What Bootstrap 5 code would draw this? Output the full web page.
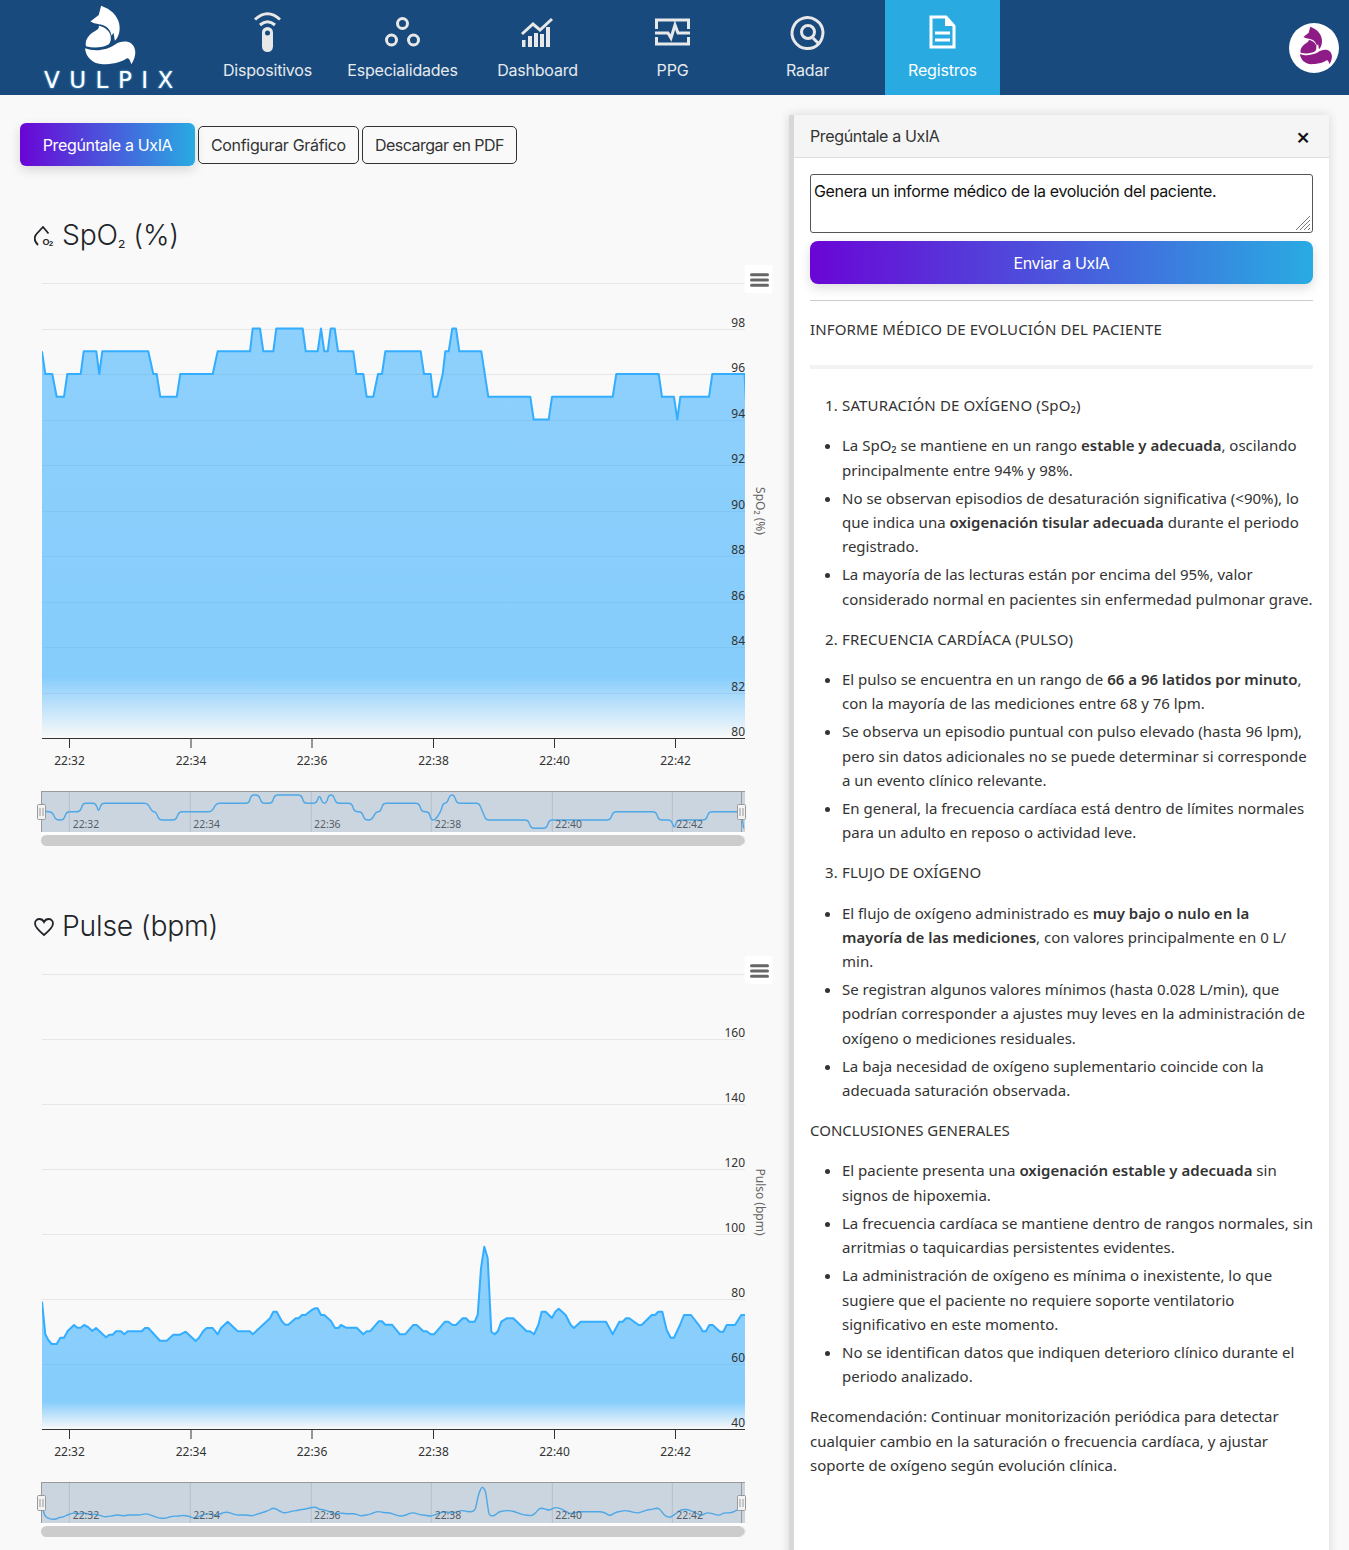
<!DOCTYPE html>
<html lang="es">
<head>
    <meta charset="UTF-8">
    <meta name="viewport" content="width=device-width, initial-scale=1.0">
    <title>Registros - Vulpix</title>
    <link href="https://cdn.jsdelivr.net/npm/bootstrap@5.3.2/dist/css/bootstrap.min.css" rel="stylesheet">
    <style>
        body {
            background-color: #f9f9f9;
            font-family: Inter, "Noto Sans", sans-serif;
            color: #212529;
            overflow: hidden;
            height: 1550px;
        }
        .topbar {
            background-color: #194a7d;
            height: 95px;
            align-items: stretch;
            flex-wrap: nowrap;
        }
        .brand-box {
            width: 210px;
            height: 95px;
            padding: 5px 0 0 44px;
        }
        .brand-fox { display: block; width: 52px; height: 60px; margin-left: 41px; fill: #fff; }
        .brand-name {
            display: block;
            margin-top: 4px;
            color: #fff;
            font-family: "DejaVu Sans", sans-serif;
            font-size: 23px;
            line-height: 23px;
            letter-spacing: 9.5px;
            white-space: nowrap;
            text-shadow: 0 0 2px #7fd0f0;
        }
        .topbar .navbar-nav { gap: 20px; }
        .topbar .nav-link {
            width: 115px;
            height: 95px;
            padding: 0;
            color: #e6eaee;
            font-size: 16px;
            letter-spacing: -.2px;
            text-align: center;
            white-space: nowrap;
        }
        .topbar .nav-link.active { background-color: #29abe2; color: #fff; }
        .topbar .nav-link svg { display: block; width: 115px; height: 60px; margin-bottom: -2px; }
        .menu-ico { fill: none; stroke: #e8e8e8; stroke-width: 3; }
        .active .menu-ico { stroke: #fff; }
        .avatar-round {
            width: 50px;
            height: 50px;
            margin: 23px 10px 0 0;
            border-radius: 50%;
            background-color: #fff;
        }
        .avatar-round svg { display: block; width: 33px; height: 41px; margin: 2px 0 0 11px; fill: #8e1b86; }

        .charts-col { width: 789px; flex: none; padding: 28px 0 0 20px; }
        .tool-row { gap: 3px; }
        .btn-uxia {
            background: linear-gradient(90deg, #6a05d6, #29abe2);
            color: #fff;
            border: 0;
            border-radius: 6px;
            box-shadow: 0 4px 12px rgba(0, 0, 0, .14);
            letter-spacing: -.35px;
        }
        .btn-uxia:hover { color: #fff; }
        .tool-btn {
            height: 38px;
            padding: 0 12px;
            border: 1px solid #333;
            border-radius: 5px;
            color: #333;
            letter-spacing: -.33px;
        }
        .pdf-btn { letter-spacing: -.5px; }
        .ask-btn { width: 175px; height: 43px; padding: 0; }
        .chart-title {
            display: flex;
            align-items: center;
            gap: 8px;
            height: 40px;
            margin: 50px 0 6px 14px;
            font-size: 28.3px;
            font-weight: 300;
            letter-spacing: -.2px;
        }
        .chart-title svg { flex: none; width: 20px; height: 20px; }
        .sub-two { font-size: 18px; }
        .chart-box { display: block; width: 760px; height: 592px; margin-bottom: 53px; font-family: "Noto Sans", sans-serif; }

        .ia-panel {
            width: 540px;
            height: 1500px;
            margin-top: 20px;
            border: 0;
            border-left: 5px solid #d8d8d8;
            border-radius: 0;
            background-color: #fff;
            box-shadow: 0 0 10px rgba(0, 0, 0, .14);
        }
        .ia-panel .card-header {
            display: flex;
            justify-content: space-between;
            align-items: center;
            height: 43px;
            padding: 0 16px;
            border-radius: 0;
            background-color: #f5f5f5;
            border-bottom: 1px solid #ddd;
            font-size: 16px;
            letter-spacing: -.35px;
            color: #333;
        }
        .close-x { border: 0; background: none; padding: 0; width: 20px; font-size: 22px; line-height: 22px; font-weight: 500; color: #111; }
        .ia-panel .card-body { padding: 16px; }
        .ask-input {
            display: block;
            width: 100%;
            height: 59px;
            padding: 3px 3px;
            border: 1px solid #555;
            border-radius: 3px;
            font-size: 16px;
            line-height: 26px;
            letter-spacing: -.35px;
            color: #111;
            background-color: #fff;
            resize: none;
        }
        .ask-grip { right: 2px; bottom: 2px; width: 16px; height: 16px; }
        .send-btn { display: block; width: 100%; height: 43px; margin-top: 8px; padding: 0; border-radius: 8px; }
        .thin-rule { margin: 16px 0 16px; border: 0; border-top: 1px solid #ccc; opacity: 1; }
        .report-text {
            font-family: "Noto Sans", sans-serif;
            font-size: 15px;
            line-height: 24.2px;
            color: #333;
        }
        .report-text p { margin-bottom: 16px; }
        .report-text ol, .report-text ul { margin-bottom: 16px; padding-left: 32px; }
        .report-text ul li { margin-bottom: 4px; }
        .report-text ul li:last-child { margin-bottom: 0; }
        .report-text b { font-weight: 600; }
        .report-text .caps-line { letter-spacing: .15px; }
        .thick-rule { height: 4px; margin: 24px 0; border: 0; background-color: #f3f3f3; opacity: 1; }
    </style>
</head>
<body>
    <svg width="0" height="0" class="position-absolute">
        <symbol id="fox" viewBox="137 15 155 175">
            <path d="M185 15 L205 24 C228 38 243 62 240 88 C239 100 234 112 226 120 L222 96 L216 105 C214 90 205 80 195 75 C180 68 165 70 153 62 L178 43 Z"/>
            <path d="M178 75 C192 78 206 86 212 100 C216 112 214 122 208 130 C190 140 165 143 140 136 C136 120 146 105 160 95 C172 87 180 85 178 75 Z"/>
            <path d="M137 142 C165 153 205 148 228 130 C240 122 262 118 275 128 C290 140 292 165 275 190 C272 178 268 170 262 172 C245 185 215 190 190 190 C160 188 140 170 137 142 Z"/>
        </symbol>
    </svg>

    <nav class="navbar topbar p-0 justify-content-start">
        <div class="brand-box">
            <svg class="brand-fox"><use href="#fox"/></svg>
            <span class="brand-name">VULPIX</span>
        </div>
        <ul class="navbar-nav flex-row">
            <li class="nav-item">
                <a class="nav-link" href="#">
                    <svg viewBox="0 0 115 60">
                        <path class="menu-ico" d="M45 19.5 Q57.5 8 70 19.5 M50 25 Q57.5 18.5 65 25"/>
                        <rect x="52" y="27" width="11" height="25" rx="5.5" fill="#e8e8e8"/>
                        <circle cx="57.5" cy="33" r="2.5" fill="#194a7d"/>
                    </svg>
                    Dispositivos
                </a>
            </li>
            <li class="nav-item">
                <a class="nav-link" href="#">
                    <svg viewBox="0 0 115 60">
                        <g class="menu-ico"><circle cx="57.5" cy="23.5" r="5"/><circle cx="46.5" cy="40" r="5"/><circle cx="68.5" cy="40" r="5"/></g>
                    </svg>
                    Especialidades
                </a>
            </li>
            <li class="nav-item">
                <a class="nav-link" href="#">
                    <svg viewBox="0 0 115 60">
                        <path fill="#e8e8e8" d="M42 40h3.500v7h-3.500zM48 36h4v11h-4zM54 33h4v14h-4zM60 34h4v13h-4zM66 27h4v20h-4z"/>
                        <path class="menu-ico" stroke-width="2.600" d="M42 34 L53 24 L60 30 L72 19"/>
                    </svg>
                    Dashboard
                </a>
            </li>
            <li class="nav-item">
                <a class="nav-link" href="#">
                    <svg viewBox="0 0 115 60">
                        <path class="menu-ico" d="M41.500 29 V20 H73.500 V29 M41.500 37 V44 H73.500 V37 M40 33 H53 L56 38 L60 25 L63 33 H75"/>
                    </svg>
                    PPG
                </a>
            </li>
            <li class="nav-item">
                <a class="nav-link" href="#">
                    <svg viewBox="0 0 115 60">
                        <path class="menu-ico" stroke-width="3.400" d="M69 43.500 A15.500 15.500 0 1 1 73 32 C73 37 71 41 69 43.500 M63 38 L69 44"/>
                        <circle class="menu-ico" stroke-width="3.400" cx="58" cy="32" r="6.500"/>
                    </svg>
                    Radar
                </a>
            </li>
            <li class="nav-item">
                <a class="nav-link active" href="#">
                    <svg viewBox="0 0 115 60">
                        <path class="menu-ico" stroke-width="3.500" d="M46 17 H61 L69 26 V47 H46 Z"/>
                        <path fill="#fff" d="M60 16 L70 26 H60 Z"/>
                        <path fill="#fff" d="M50 31.500h15v3H50zM50 38.500h15v3H50z"/>
                    </svg>
                    Registros
                </a>
            </li>
        </ul>
        <div class="avatar-round ms-auto">
            <svg><use href="#fox"/></svg>
        </div>
    </nav>

    <main class="d-flex">
        <section class="charts-col">
            <div class="d-flex align-items-center tool-row">
                <button class="btn btn-uxia ask-btn" type="button">Pregúntale a UxIA</button>
                <button class="btn tool-btn" type="button">Configurar Gráfico</button>
                <button class="btn tool-btn pdf-btn" type="button">Descargar en PDF</button>
            </div>

            <h2 class="chart-title">
                <svg viewBox="0 0 20 20">
                    <path d="M4 19 C0 15 0 11 2.500 8 L9 1 L14.500 7.500" fill="none" stroke="#212529" stroke-width="1.800"/>
                    <text x="8.500" y="19" font-size="9" font-weight="700" fill="#212529" font-family="Liberation Sans, sans-serif">O</text>
                    <text x="15" y="19.500" font-size="7.500" font-weight="700" fill="#212529" font-family="Liberation Sans, sans-serif">2</text>
                </svg>
                <span>SpO<span class="sub-two">₂</span> (%)</span>
            </h2>
            <svg class="chart-box" id="chartSpo2" viewBox="20 262 760 592"></svg>

            <h2 class="chart-title">
                <svg viewBox="0 0 20 20">
                    <path d="M10 18 C4 13 1 10 1 6.500 C1 3.500 3.200 2 5.500 2 C7.500 2 9 3 10 5 C11 3 12.500 2 14.500 2 C16.800 2 19 3.500 19 6.500 C19 10 16 13 10 18 Z" fill="none" stroke="#212529" stroke-width="1.800"/>
                </svg>
                <span>Pulse (bpm)</span>
            </h2>
            <svg class="chart-box" id="chartPulse" viewBox="20 262 760 592"></svg>
        </section>

        <aside class="card ia-panel">
            <div class="card-header">
                <span>Pregúntale a UxIA</span>
                <button class="close-x" type="button">×</button>
            </div>
            <div class="card-body">
                <div class="position-relative">
                    <textarea class="ask-input">Genera un informe médico de la evolución del paciente.</textarea>
                    <svg class="ask-grip position-absolute" viewBox="0 0 16 16"><path d="M15 1 L1 15 M15 5 L5 15 M15 9 L9 15 M15 13 L13 15" stroke="#777" fill="none"/></svg>
                </div>
                <button class="btn btn-uxia send-btn" type="button">Enviar a UxIA</button>
                <hr class="thin-rule">
                <div class="report-text">
                    <p class="caps-line">INFORME MÉDICO DE EVOLUCIÓN DEL PACIENTE</p>
                    <hr class="thick-rule">
                    <ol class="caps-line"><li>SATURACIÓN DE OXÍGENO (SpO₂)</li></ol>
                    <ul>
                        <li>La SpO₂ se mantiene en un rango <b>estable y adecuada</b>, oscilando principalmente entre 94% y 98%.</li>
                        <li>No se observan episodios de desaturación significativa (&lt;90%), lo que indica una <b>oxigenación tisular adecuada</b> durante el periodo registrado.</li>
                        <li>La mayoría de las lecturas están por encima del 95%, valor considerado normal en pacientes sin enfermedad pulmonar grave.</li>
                    </ul>
                    <ol class="caps-line" start="2"><li>FRECUENCIA CARDÍACA (PULSO)</li></ol>
                    <ul>
                        <li>El pulso se encuentra en un rango de <b>66 a 96 latidos por minuto</b>, con la mayoría de las mediciones entre 68 y 76 lpm.</li>
                        <li>Se observa un episodio puntual con pulso elevado (hasta 96 lpm), pero sin datos adicionales no se puede determinar si corresponde a un evento clínico relevante.</li>
                        <li>En general, la frecuencia cardíaca está dentro de límites normales para un adulto en reposo o actividad leve.</li>
                    </ul>
                    <ol class="caps-line" start="3"><li>FLUJO DE OXÍGENO</li></ol>
                    <ul>
                        <li>El flujo de oxígeno administrado es <b>muy bajo o nulo en la mayoría de las mediciones</b>, con valores principalmente en 0&nbsp;L/<wbr>min.</li>
                        <li>Se registran algunos valores mínimos (hasta 0.028 L/min), que podrían corresponder a ajustes muy leves en la administración de oxígeno o mediciones residuales.</li>
                        <li>La baja necesidad de oxígeno suplementario coincide con la adecuada saturación observada.</li>
                    </ul>
                    <p>CONCLUSIONES GENERALES</p>
                    <ul>
                        <li>El paciente presenta una <b>oxigenación estable y adecuada</b> sin signos de hipoxemia.</li>
                        <li>La frecuencia cardíaca se mantiene dentro de rangos normales, sin arritmias o taquicardias persistentes evidentes.</li>
                        <li>La administración de oxígeno es mínima o inexistente, lo que sugiere que el paciente no requiere soporte ventilatorio significativo en este momento.</li>
                        <li>No se identifican datos que indiquen deterioro clínico durante el periodo analizado.</li>
                    </ul>
                    <p>Recomendación: Continuar monitorización periódica para detectar cualquier cambio en la saturación o frecuencia cardíaca, y ajustar soporte de oxígeno según evolución clínica.</p>
                </div>
            </div>
        </aside>
    </main>

    <script src="https://cdn.jsdelivr.net/npm/bootstrap@5.3.2/dist/js/bootstrap.bundle.min.js"></script>
    <script>
        // [x, valor] de cada serie, x en pixeles del grafico
        const spo2 = [[42,97],[45.3,96],[52.3,96],[56.7,95],[64,95],[67.3,96],[80.7,96],[83.7,97],[96.3,97],[99.3,96],[102.3,97],
            [148.3,97],[153.3,96],[156.7,96],[160.3,95],[176.7,95],[180.3,96],[212.7,96],[217.7,97],[250,97],[252.7,98],[260,98],
            [263.3,97],[273.3,97],[276.3,98],[302.7,98],[305.7,97],[317.7,97],[321,98],[324.3,97],[327.7,97],[330.7,98],[334.7,98],
            [338,97],[353.3,97],[356.3,96],[363.3,96],[366.7,95],[373.3,95],[378,96],[382,96],[385.3,97],[420.7,97],[424,96],
            [430.7,96],[433.3,95],[437.3,95],[442.7,96],[445.3,97],[448.7,97],[452.3,98],[456,98],[459.3,97],[481.3,97],[488.3,95],
            [530.3,95],[533.7,94],[548.7,94],[552,95],[612.7,95],[616.3,96],[658.7,96],[662,95],[674,95],[677.3,94],[680.3,95],
            [709,95],[712.3,96],[744.5,96],[747,94]];

        const pulseA = [[66,245],[76,343],[85,360],[95,372],[110,372],[121,353],[132,353],[143,333],[162,315],[172,323],[182,323],
            [192,315],[204,321],[217,333],[228,324],[258,352],[268,344],[278,344],[288,334],[303,334],[313,343],[323,334],[365,334],
            [375,324],[385,324],[420,362],[440,362],[460,344],[480,344],[497,335],[527,363],[537,353],[550,333],[560,324],[578,324],
            [593,343],[603,324],[623,305],[653,334],[690,334],[698,343],[750,295],[760,275],[770,275],[785,303],[795,314],[805,314],
            [827,295],[836,295],[846,285],[856,285],[875,270],[885,265],[893,265],[903,285],[913,285],[933,303],[945,324],[955,324],
            [963,315],[978,323],[1010,323],[1030,343],[1040,334],[1050,334],[1076,304],[1086,304],[1096,314],[1116,314],[1140,343]];
        const pulseB = [[15,343],[40,315],[50,315],[70,334],[80,334],[92,343],[102,343],[135,305],[145,305],[158,315],[168,315],
            [188,295],[198,295],[208,305],[224,305],[233,285],[243,145],[253,80],[263,115],[274,335],[284,343],[294,333],[304,305],
            [320,295],[340,295],[380,334],[390,334],[402,343],[415,315],[425,275],[437,275],[456,294],[466,275],[476,266],[497,285],
            [512,315],[522,324],[542,305],[618,305],[638,343],[658,305],[668,305],[678,295],[688,295],[716,315],[725,315],[755,285],
            [765,285],[775,275],[787,275],[800,330],[812,353],[822,353],[840,315],[852,285],[873,285],[900,320],[908,334],[918,334],
            [928,315],[938,315],[960,335],[970,335],[980,315],[1005,315],[1024,285],[1035,285]];

        const ticks = [[69.5, 72.7, '22:32'], [191, 193.3, '22:34'], [312, 314, '22:36'], [433.5, 434.7, '22:38'], [554.5, 555.3, '22:40'], [675.5, 676.3, '22:42']];
        const navLines = [69.3, 190.3, 311.3, 431.3, 552.3, 672.3];

        function linePath(pts) {
            return pts.map((p, i) => (i ? 'L' : 'M') + p[0].toFixed(1) + ' ' + p[1].toFixed(1)).join(' ');
        }

        // linea del navegador con las esquinas suavizadas
        function smoothPath(pts, r) {
            let d = 'M' + pts[0][0] + ' ' + pts[0][1];
            for (let i = 1; i < pts.length - 1; i++) {
                const [x, y] = pts[i], [px, py] = pts[i - 1], [nx, ny] = pts[i + 1];
                const l1 = Math.hypot(x - px, y - py), l2 = Math.hypot(nx - x, ny - y);
                const a = Math.min(r, l1 / 2) / l1, b = Math.min(r, l2 / 2) / l2;
                d += ` L${(x + (px - x) * a).toFixed(1)} ${(y + (py - y) * a).toFixed(1)} Q${x} ${y} ${(x + (nx - x) * b).toFixed(1)} ${(y + (ny - y) * b).toFixed(1)}`;
            }
            const last = pts[pts.length - 1];
            return d + ' L' + last[0] + ' ' + last[1];
        }

        function drawChart(svg, cfg) {
            const id = svg.id;
            let html = `<defs>
                <clipPath id="${id}Clip"><rect x="42" y="262" width="703" height="592"/></clipPath>
                <linearGradient id="${id}Fill" x1="0" y1="0" x2="0" y2="1">
                    <stop offset="0" stop-color="#33adff" stop-opacity=".54"/>
                    <stop offset=".85" stop-color="#33adff" stop-opacity=".58"/>
                    <stop offset="1" stop-color="#33adff" stop-opacity="0"/>
                </linearGradient></defs>`;

            cfg.grid.forEach(y => { html += `<path d="M42 ${y}H745" stroke="#e6e6e6"/>`; });

            const area = linePath(cfg.points) + ' L747 738 L42 738 Z';
            html += `<g clip-path="url(#${id}Clip)">
                <path d="${area}" fill="url(#${id}Fill)"/>
                <path d="${linePath(cfg.points)}" fill="none" stroke="#33adff" stroke-width="2" stroke-linejoin="round"/></g>`;

            cfg.labels.forEach(([y, txt]) => {
                html += `<text x="745" y="${y - 2.5}" text-anchor="end" font-size="12" fill="#333">${txt}</text>`;
            });

            html += '<path d="M42 738.500H745" stroke="#333"/>';
            ticks.forEach(([x, nx, txt]) => {
                html += `<path d="M${x} 739V748" stroke="#333"/>`;
                html += `<text x="${x}" y="764.500" text-anchor="middle" font-size="12" fill="#333">${txt}</text>`;
            });

            html += `<text transform="translate(756 511) rotate(90)" text-anchor="middle" font-size="12" fill="#666">${cfg.title}</text>`;

            // boton de menu
            html += '<rect x="744.500" y="265" width="28" height="28" rx="2" fill="#fff"/>';
            html += '<path d="M751.500 274.700H767.500M751.500 280H767.500M751.500 285.300H767.500" stroke="#666" stroke-width="3" stroke-linecap="round"/>';

            // navegador
            html += '<rect x="41" y="791" width="704" height="41" fill="#cbd5e0"/>';
            navLines.forEach(x => { html += `<path d="M${x} 792V832" stroke="#b4bfcb"/>`; });
            html += `<g clip-path="url(#${id}Clip)"><path d="${smoothPath(cfg.navPoints, 3)}" fill="none" stroke="#4ea8e6" stroke-width="1.400"/></g>`;
            ticks.forEach(([x, nx, txt]) => {
                html += `<text x="${nx}" y="828.300" font-size="10.400" fill="#555d68">${txt}</text>`;
            });
            html += '<path d="M41 791.500H745M41.500 791V832M741.500 791V832" stroke="#999"/>';
            [41.500, 741.500].forEach(x => {
                html += `<rect x="${x - 4}" y="804.500" width="8" height="15" rx="1" fill="#f2f2f2" stroke="#999"/>`;
                html += `<path d="M${x - 1.500} 808V816M${x + 1.500} 808V816" stroke="#999"/>`;
            });

            // scrollbar
            html += '<rect x="41" y="832" width="704" height="3" fill="#fdfdfd"/>';
            html += '<rect x="41" y="835" width="704" height="11" rx="5.500" fill="#ccc"/>';
            html += '<path d="M740.500 835.500A5 5 0 0 1 740.500 845.500" fill="none" stroke="#f2f2f2" stroke-width="1.200"/>';
            svg.innerHTML = html;
        }

        const spoPts = spo2.map(([x, v]) => [x, 328.5 + (98 - v) * 22.75]);
        const spoGrid = [283.5, 329.5, 374.5, 420.5, 465.5, 511.5, 556.5, 602.5, 647.5, 693.5];
        const spoLabels = [[329.5, 98], [374.5, 96], [420.5, 94], [465.5, 92], [511.5, 90], [556.5, 88], [602.5, 86], [647.5, 84], [693.5, 82], [738.5, 80]];
        drawChart(document.getElementById('chartSpo2'), {
            points: spoPts,
            navPoints: spo2.map(([x, v]) => [41.5 + (x - 42) * .996, 795 + (98 - v) * 8.33]),
            grid: spoGrid,
            labels: spoLabels,
            title: 'SpO₂ (%)'
        });

        // el pulso va con los mismos ejes, 691px mas abajo en la pagina
        const pulsePage = pulseA.map(([a, b]) => [20 + a / 3, 1220 + b / 3]).concat(pulseB.map(([a, b]) => [400 + a / 3, 1220 + b / 3]));
        drawChart(document.getElementById('chartPulse'), {
            points: pulsePage.map(([x, y]) => [x, y - 691]),
            navPoints: pulsePage.map(([x, y]) => [41.5 + (x - 42) * .996, 1486 - 691 + (y - 1246) * .34]),
            grid: [283.5, 348.5, 413.5, 478.5, 543.5, 608.5, 673.5],
            labels: [[348.5, 160], [413.5, 140], [478.5, 120], [543.5, 100], [608.5, 80], [673.5, 60], [738.5, 40]],
            title: 'Pulso (bpm)'
        });
    </script>
</body>
</html>
